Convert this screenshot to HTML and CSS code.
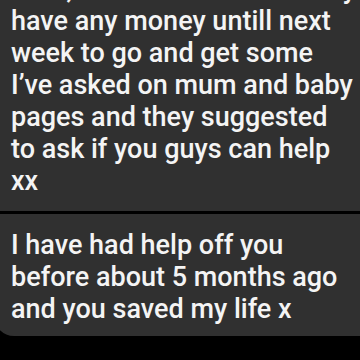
FILE: index.html
```html
<!DOCTYPE html>
<html>
<head>
<meta charset="utf-8">
<link rel="stylesheet" href="styles.css">
</head>
<body>
<div class="thread">
  <div class="bubble first">
    <p>food, and I don't think I really<br>have any money untill next<br>week to go and get some<br>I’ve asked on mum and baby<br>pages and they suggested<br>to ask if you guys can help<br>xx</p>
  </div>
  <div class="bubble last">
    <p>I have had help off you<br>before about 5 months ago<br>and you saved my life x</p>
  </div>
</div>
</body>
</html>
```
FILE: styles.css
```css
html, body {
  margin: 0;
  padding: 0;
  background: #000;
  width: 360px;
  height: 360px;
  overflow: hidden;
}
.thread {
  display: flex;
  flex-direction: column;
  gap: 3px;
  margin-top: -39px;
}
.bubble {
  background: #303030;
  margin-left: -6px;
  margin-right: -20px;
  padding: 12px 20px 14px 17px;
  color: #f4f4f4;
  font-family: Roboto, "Noto Sans", sans-serif;
  font-size: 27px;
  font-weight: 500;
  line-height: 32px;
  white-space: nowrap;
}
.bubble p {
  margin: 0;
}
.bubble.last {
  padding-top: 15px;
  padding-bottom: 11px;
  border-radius: 0 0 0 20px;
}
```
